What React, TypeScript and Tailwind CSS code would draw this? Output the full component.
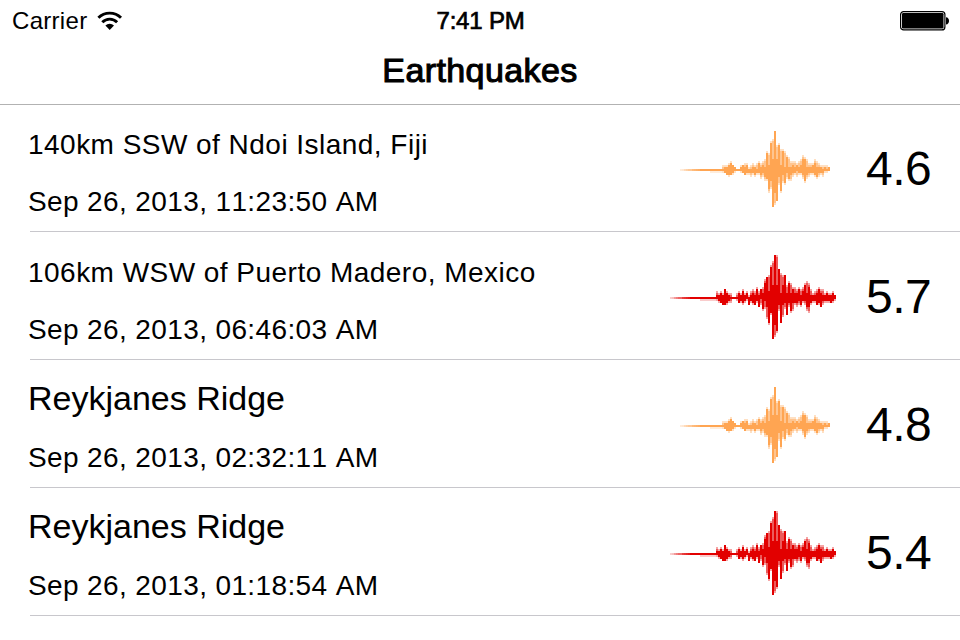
type Column = [number, number, number, number];

type Wave = { start: number; clusterStart: number; color: string; columns: Column[] };

// Each column is two units wide: faint top, solid top, solid bottom, faint bottom.
const moderate: Wave = {
  start: 10,
  clusterStart: 52,
  color: '#ffa552',
  columns: [
    [-2, 0, 1, 2], [-2, -1, 2, 2], [-2, -1, 3, 3], [-3, -2, 3, 4], [-4, -3, 3, 3], [-2, -2, 2, 3], [-1, -1, 1, 2],
    [0, 0, 1, 1], [0, 0, 1, 1], [-2, -1, 1, 2], [-2, -2, 2, 2], [-3, -1, 3, 3], [-3, -2, 2, 3], [-1, 0, 2, 3],
    [-2, 0, 2, 4], [-3, -1, 2, 3], [-2, -1, 3, 4], [-3, 0, 2, 3], [-4, -3, 2, 3], [-3, -1, 3, 5], [-4, -2, 2, 4],
    [-5, -1, 4, 6], [-9, -8, 5, 6], [-8, -2, 10, 12], [-14, -13, 6, 10], [-15, -5, 19, 19], [-19, -19, 12, 18],
    [-12, -5, 16, 16], [-13, -12, 4, 8], [-10, -2, 11, 12], [-10, -9, 3, 7], [-9, -1, 7, 8], [-7, -6, 2, 5],
    [-6, -1, 5, 6], [-4, -1, 3, 6], [-4, -2, 2, 4], [-4, -1, 2, 3], [-3, -2, 1, 4], [-4, -1, 2, 3], [-5, -2, 2, 3],
    [-7, -5, 3, 5], [-6, -5, 6, 7], [-5, -1, 3, 5], [-3, -1, 2, 4], [-3, -1, 2, 3], [-3, -2, 2, 3], [-5, -3, 3, 4],
    [-4, -1, 4, 5], [-3, -1, 2, 4], [-2, -1, 2, 3], [-2, 0, 2, 4], [-2, -1, 1, 2], [-2, 0, 1, 2], [-1, -1, 1, 1],
  ],
};

const strong: Wave = {
  start: 0,
  clusterStart: 46,
  color: '#e20000',
  columns: [
    [-3, -1, 1, 2], [-2, -1, 2, 3], [-3, -2, 3, 3], [-2, -1, 4, 4], [-4, -4, 4, 4], [-3, -2, 3, 4], [-2, -1, 2, 3],
    [-2, 0, 1, 3], [0, 0, 1, 1], [0, 0, 1, 1], [-2, 0, 1, 2], [-3, -2, 3, 3], [-2, -1, 2, 3], [-4, -3, 3, 4],
    [-2, -1, 2, 3], [-3, -2, 1, 2], [-1, 0, 4, 4], [-3, -1, 2, 3], [-4, -2, 3, 4], [-3, -1, 4, 4], [-5, -4, 2, 3],
    [-3, -1, 5, 5], [-4, -4, 1, 4], [-5, -2, 6, 7], [-9, -7, 2, 6], [-10, -10, 5, 11], [-11, -3, 13, 14],
    [-16, -15, 8, 9], [-18, -6, 21, 21], [-21, -21, 14, 20], [-21, -6, 17, 18], [-14, -14, 4, 7], [-12, -2, 13, 13],
    [-11, -6, 4, 10], [-11, -11, 3, 6], [-6, -2, 9, 9], [-8, -7, 3, 5], [-7, -2, 7, 8], [-5, -4, 3, 7], [-5, -2, 3, 4],
    [-4, -2, 3, 5], [-5, -4, 2, 4], [-4, -1, 4, 5], [-5, -3, 2, 3], [-7, -6, 2, 4], [-8, -2, 5, 7], [-7, -5, 5, 8],
    [-4, -1, 3, 4], [-2, -1, 2, 3], [-3, -1, 2, 3], [-4, -2, 4, 4], [-5, -4, 3, 4], [-4, -2, 5, 5], [-4, -1, 2, 4],
    [-2, -1, 2, 3], [-3, -2, 2, 3], [-2, -1, 2, 3], [-2, -1, 3, 3], [-3, -2, 2, 3], [-1, -1, 1, 2],
  ],
};

function Seismogram({ wave }: { wave: Wave }) {
  const { start, clusterStart, color, columns } = wave;
  return (
    <svg width="170" height="128" viewBox="0 -65 170 128" fill={color} shapeRendering="crispEdges" className="shrink-0">
      {[0.2, 0.25, 0.4, 0.5, 0.6, 0.6, 0.75, 0.8, 0.85, 0.9].map((o, i) => (
        <rect key={i} x={start + i * 2} y="0" width="2" height="2" opacity={o} />
      ))}
      <rect x={start + 20} y="0" width={clusterStart - start - 20} height="2" />
      <rect x={start + 30} y="2" width={clusterStart - start - 30} height="2" opacity="0.2" />
      {columns.map(([a, b, c, d], i) => {
        const x = clusterStart + i * 2;
        return (
          <g key={i}>
            <rect x={x} y={a * 2} width="2" height={(d - a) * 2} opacity="0.35" />
            {d - a > 2 && <rect x={x} y={a * 2 + 2} width="2" height={(d - a) * 2 - 4} opacity="0.45" />}
            <rect x={x} y={b * 2} width="2" height={(c - b) * 2} />
          </g>
        );
      })}
    </svg>
  );
}

const quakes = [
  { place: '140km SSW of Ndoi Island, Fiji', time: 'Sep 26, 2013, 11:23:50 AM', magnitude: '4.6', long: true },
  { place: '106km WSW of Puerto Madero, Mexico', time: 'Sep 26, 2013, 06:46:03 AM', magnitude: '5.7', long: true },
  { place: 'Reykjanes Ridge', time: 'Sep 26, 2013, 02:32:11 AM', magnitude: '4.8', long: false },
  { place: 'Reykjanes Ridge', time: 'Sep 26, 2013, 01:18:54 AM', magnitude: '5.4', long: false },
];

export default function App() {
  return (
    <div className="h-[640px] w-[960px] overflow-hidden bg-white font-['Liberation_Sans',Arial,sans-serif] text-black [font-kerning:none]">
      <header className="h-[105px] border-b border-[#b2b2b2]">
        <div className="grid h-10 grid-cols-3 items-center pl-3 pr-[10px] text-2xl leading-10">
          <div className="flex items-center gap-[10px]">
            <span className="pt-px tracking-[0.3px]">Carrier</span>
            <svg width="26" height="20" viewBox="0 0 26 20" fill="none" stroke="#000" strokeWidth="2.9">
              <path d="M1.4 6.8a16 16 0 0 1 22.6 0" />
              <path d="M5.3 11.2a10.4 10.4 0 0 1 14.8 0" />
              <path d="M8.4 14.6a6.2 6.2 0 0 1 8.6 0L12.7 19z" fill="#000" stroke="none" />
            </svg>
          </div>
          <span className="pr-px pt-px text-center tracking-[-0.2px] [-webkit-text-stroke:0.7px_#000]">7:41 PM</span>
          <svg width="50" height="20" viewBox="0 0 50 20" className="mt-px justify-self-end">
            <rect x="0.6" y="0.6" width="44.3" height="18.3" rx="3" fill="none" stroke="#000" strokeWidth="1.2" />
            <rect x="2" y="2" width="41.5" height="15.5" rx="1.2" />
            <path d="M46 6.3c4 0 4 7.2 0 7.2z" />
          </svg>
        </div>
        <h1 className="text-center text-[34px] leading-[60px] tracking-[0.4px] [-webkit-text-stroke:1.1px_#000]">Earthquakes</h1>
      </header>
      <ul className="-mt-px">
        {quakes.map((q) => (
          <li key={q.time} className="ml-[30px] flex h-32 border-b border-[#c8c7cc]">
            <div className="-ml-0.5 w-[642px] pt-[13px] whitespace-nowrap">
              <p className={q.long ? 'pt-[5px] text-[28px] leading-[45px] tracking-[0.47px]' : 'text-[34px] leading-[50px]'}>{q.place}</p>
              <p className="pt-[9px] text-[28px] leading-[52px] tracking-[0.38px]">{q.time}</p>
            </div>
            <Seismogram wave={q.magnitude.startsWith('5') ? strong : moderate} />
            <span className="ml-[26px] pt-px text-[48px] leading-[128px] tracking-[-0.5px]">{q.magnitude}</span>
          </li>
        ))}
      </ul>
    </div>
  );
}
